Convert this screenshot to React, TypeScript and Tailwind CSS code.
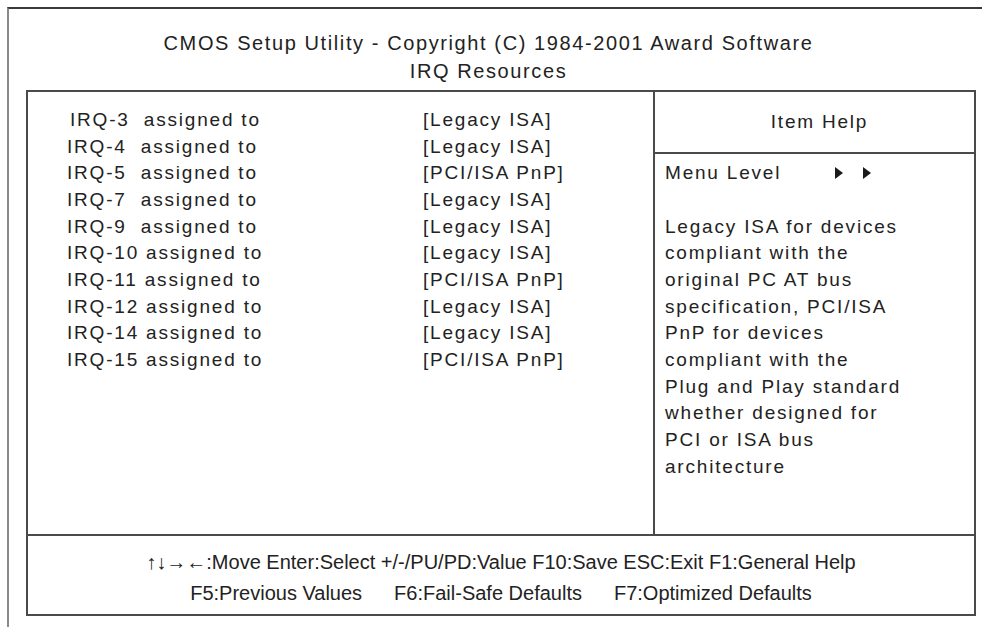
import React from 'react';

const ROWS: [string, string][] = [
  ['IRQ-3  assigned to', '[Legacy ISA]'],
  ['IRQ-4  assigned to', '[Legacy ISA]'],
  ['IRQ-5  assigned to', '[PCI/ISA PnP]'],
  ['IRQ-7  assigned to', '[Legacy ISA]'],
  ['IRQ-9  assigned to', '[Legacy ISA]'],
  ['IRQ-10 assigned to', '[Legacy ISA]'],
  ['IRQ-11 assigned to', '[PCI/ISA PnP]'],
  ['IRQ-12 assigned to', '[Legacy ISA]'],
  ['IRQ-14 assigned to', '[Legacy ISA]'],
  ['IRQ-15 assigned to', '[PCI/ISA PnP]'],
];

const HELP = [
  'Legacy ISA for devices',
  'compliant with the',
  'original PC AT bus',
  'specification, PCI/ISA',
  'PnP for devices',
  'compliant with the',
  'Plug and Play standard',
  'whether designed for',
  'PCI or ISA bus',
  'architecture',
];

const Arrow = () => (
  <svg width="8" height="12" viewBox="0 0 8 12" className="inline-block">
    <path d="M0 0 L8 6 L0 12 Z" fill="#1a1a1a" />
  </svg>
);

const App: React.FC = () => {
  return (
    <div className="w-[982px] h-[627px] bg-white overflow-hidden pt-[7px] pl-[7px] text-[#222]" style={{ fontFamily: '"Liberation Sans", Arial, sans-serif' }}>
      <div className="h-full border-t-2 border-l-2 border-t-[#3a3a3a] border-l-[#8a8a8a]">
        {/* Title */}
        <div className="flex flex-col items-center pt-[20px] pr-[14px] text-[20px] tracking-[1.6px] leading-[28px]">
          <div>CMOS Setup Utility - Copyright (C) 1984-2001 Award Software</div>
          <div>IRQ Resources</div>
        </div>

        <div className="ml-[17px] mt-[5px] w-[950px] h-[526px] border-2 border-[#4a4a4a] flex flex-col">
          <div className="flex h-[444px] border-b-2 border-[#4a4a4a]">
            {/* Item list */}
            <div className="w-[627px] border-r-2 border-[#4a4a4a] pt-[15px] text-[19px] tracking-[1.8px] leading-[26.67px]">
              {ROWS.map(([label, value], i) => (
                <div key={i} className="flex">
                  <span className={`whitespace-pre w-[395px] ${i === 0 ? 'pl-[42px]' : 'pl-[39px]'}`}>{label}</span>
                  <span className="whitespace-pre">{value}</span>
                </div>
              ))}
            </div>

            {/* Help */}
            <div className="flex-1 flex flex-col text-[19px] tracking-[1.8px] leading-[26.67px]">
              <div className="h-[62px] border-b-2 border-[#4a4a4a] flex items-center justify-center pl-[10px]">
                Item Help
              </div>
              <div className="pt-[6px] pl-[10px]">
                <div className="flex items-center">
                  <span className="w-[170px]">Menu Level</span>
                  <span className="flex gap-[20px]"><Arrow /><Arrow /></span>
                </div>
                <div className="h-[27px]" />
                {HELP.map((l, i) => (
                  <div key={i} className="whitespace-pre">{l}</div>
                ))}
              </div>
            </div>
          </div>

          {/* Footer */}
          <div className="flex-1 flex flex-col items-center justify-center text-[20px] leading-[31px] pt-[6px]">
            <div className="whitespace-pre">↑↓→←:Move Enter:Select +/-/PU/PD:Value F10:Save ESC:Exit F1:General Help</div>
            <div className="flex gap-[32px]">
              <span>F5:Previous Values</span>
              <span>F6:Fail-Safe Defaults</span>
              <span>F7:Optimized Defaults</span>
            </div>
          </div>
        </div>
      </div>
    </div>
  );
};

export default App;
